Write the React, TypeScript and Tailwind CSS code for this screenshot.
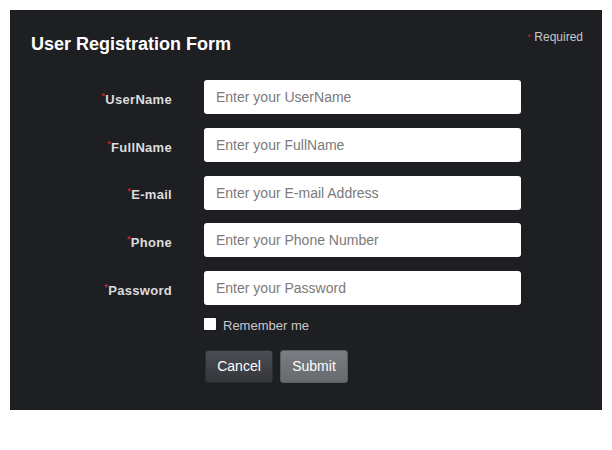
import React, { useState } from 'react';

const fields = [
  { label: 'UserName', placeholder: 'Enter your UserName', type: 'text' },
  { label: 'FullName', placeholder: 'Enter your FullName', type: 'text' },
  { label: 'E-mail', placeholder: 'Enter your E-mail Address', type: 'email' },
  { label: 'Phone', placeholder: 'Enter your Phone Number', type: 'tel' },
  { label: 'Password', placeholder: 'Enter your Password', type: 'password' },
];

export default function App() {
  const [remember, setRemember] = useState(false);

  return (
    <div className="w-[612px] h-[450px] bg-white pt-[10px] pl-[10px] font-['Liberation_Sans',Arial,sans-serif]">
      <div className="w-[592px] h-[400px] bg-[#1e1f23] relative">
        <div className="flex justify-between items-start pl-[21px] pr-[19px] pt-[24px]">
          <h1 className="text-[18px] font-bold text-white leading-5">User Registration Form</h1>
          <div className="text-[12px] text-[#c8c8c8] leading-4 -mt-[5px]">
            <span className="text-[#c0262c] text-[9px] align-top">*</span> Required
          </div>
        </div>

        <form className="mt-[26px] flex flex-col gap-[13.75px]">
          {fields.map((f, i) => (
            <div key={i} className="flex items-center">
              <label className="w-[162px] text-right text-[13px] font-bold text-[#dcdcdc] tracking-[0.3px] pt-[5px]">
                <span className="text-[#c0262c] text-[9px] align-top">*</span>
                {f.label}
              </label>
              <input
                type={f.type}
                placeholder={f.placeholder}
                className="ml-[32px] w-[317px] h-[34px] rounded-[3px] bg-white px-[12px] text-[14px] text-[#555] placeholder:text-[#7a7a7a] outline-none"
              />
            </div>
          ))}

          <label className="ml-[194px] flex items-center gap-[7px] text-[13px] text-[#c9c9c9] -mt-[3px]">
            <input
              type="checkbox"
              checked={remember}
              onChange={() => setRemember(!remember)}
              className="appearance-none w-[12px] h-[12px] bg-white rounded-[1px] -mt-[3px]"
            />
            Remember me
          </label>

          <div className="ml-[195px] flex gap-[7px] mt-[1px]">
            <button
              type="button"
              className="w-[68px] h-[33px] rounded-[3px] bg-gradient-to-b from-[#4a4d52] to-[#34363a] border border-[#2c2e31] text-[14px] text-white"
            >
              Cancel
            </button>
            <button
              type="button"
              className="w-[68px] h-[33px] rounded-[3px] bg-gradient-to-b from-[#7a7d82] to-[#66696d] border border-[#5a5c60] text-[14px] text-white"
            >
              Submit
            </button>
          </div>
        </form>
      </div>
    </div>
  );
}
